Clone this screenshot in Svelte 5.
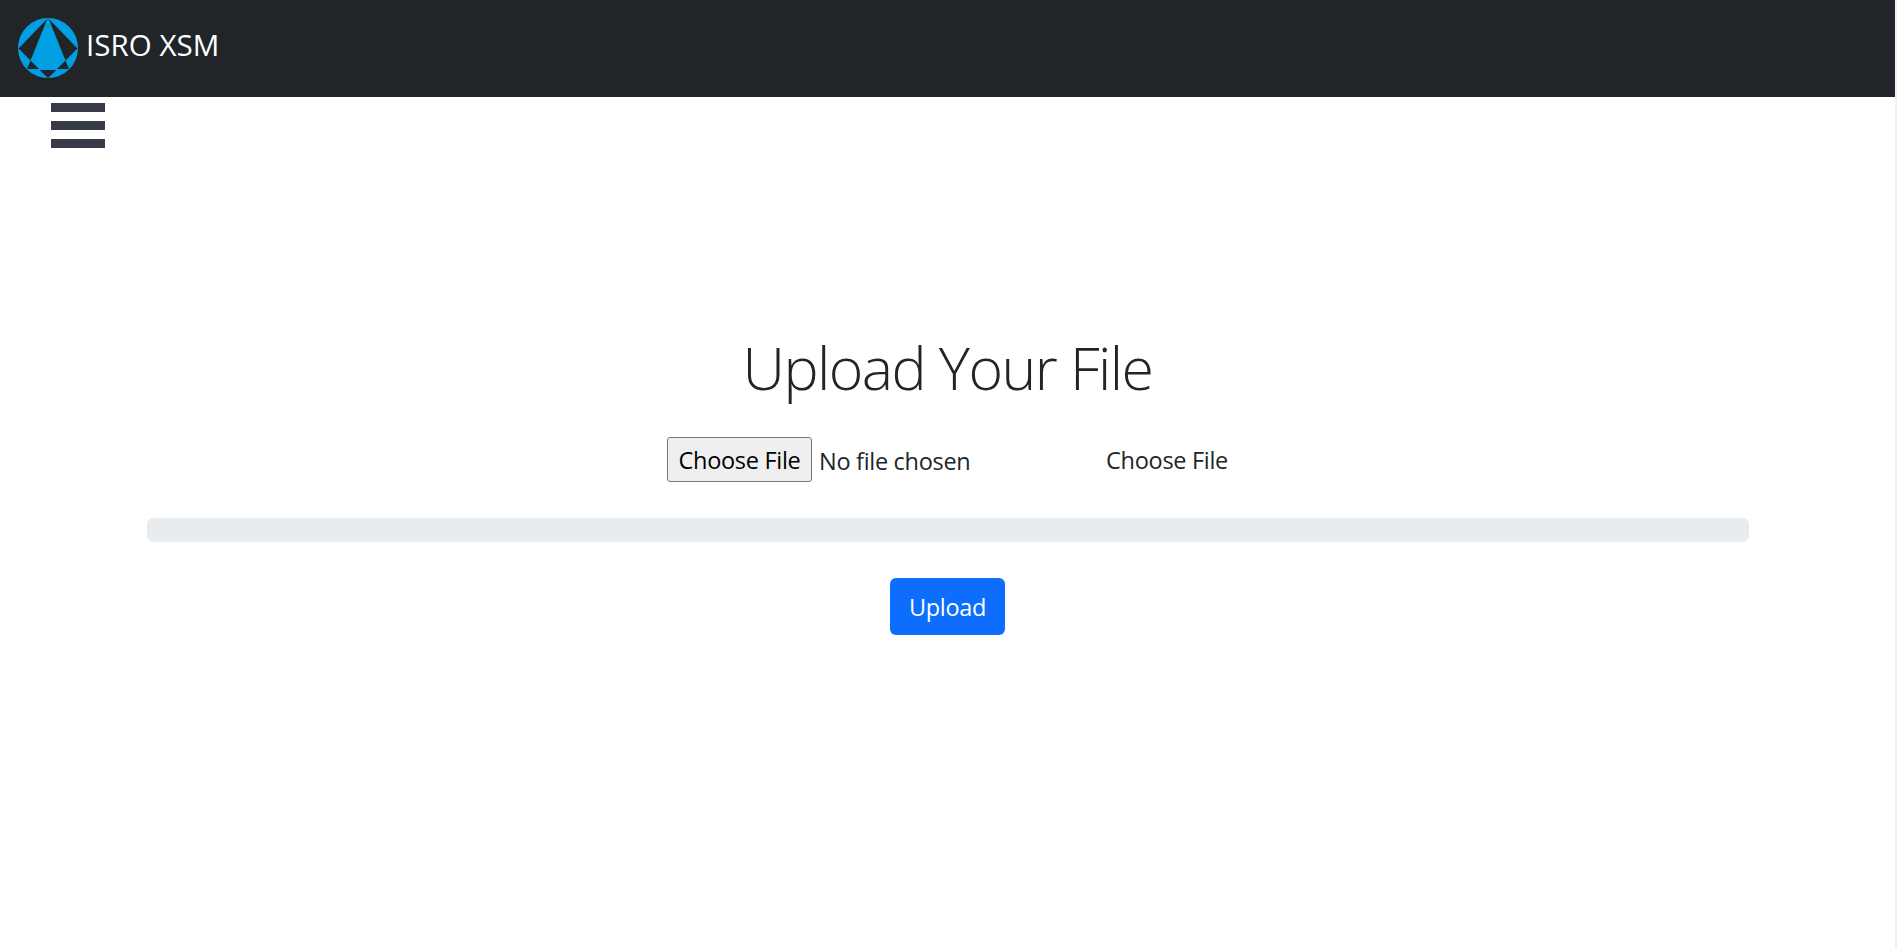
<script>
  let progress = $state(0);
</script>

<div class="page">
  <nav>
    <svg class="logo" viewBox="0 0 60 60" aria-hidden="true">
      <circle cx="30" cy="30" r="30" fill="#009fe3" />
      <g fill="#212529">
        <path d="M29.5 .5 12.5 42.5 .5 30.5Z" />
        <path d="M30.5 .5 59.5 30.5 47.5 42.5Z" />
        <path d="M12.5 42.5 21 51H9Z" />
        <path d="M47.5 42.5 39 51h12Z" />
        <path d="M21.5 52h17L30 60Z" />
      </g>
    </svg>
    <span class="brand">ISRO XSM</span>
  </nav>
  <div class="menu"><i></i><i></i><i></i></div>
  <main>
    <h1>Upload Your File</h1>
    <div class="picker">
      <button class="choose"><span class="t">Choose File</span></button>
      <span class="status">No file chosen</span>
      <span class="label t">Choose File</span>
    </div>
    <div class="track"><div class="bar" style="width: {progress}%"></div></div>
    <button class="upload">Upload</button>
  </main>
</div>

<style>
  :global(body) {
    margin: 0;
    background: #fff;
  }
  .page {
    box-sizing: border-box;
    height: 949px;
    border-right: 2px solid #f1f1f1;
    font-family: "Open Sans", "Noto Sans", sans-serif;
    font-size: 23.5px;
    color: #212529;
    overflow: hidden;
    white-space: nowrap;
  }
  nav {
    box-sizing: border-box;
    height: 97px;
    padding: 18px 18px 0;
    display: flex;
    align-items: flex-start;
    background: #212529;
    color: #fff;
  }
  .logo {
    width: 60px;
    height: 60px;
    flex: none;
  }
  .brand {
    margin-left: 8px;
    font-size: 29.5px;
    line-height: 54px;
    letter-spacing: 0.05px;
  }
  .menu {
    width: 54px;
    margin: 6px 0 0 51px;
    display: grid;
    gap: 9px;
  }
  .menu i {
    height: 9px;
    background: #373a47;
  }
  main {
    display: flex;
    flex-direction: column;
    align-items: center;
  }
  h1 {
    margin: 183px 0 0;
    height: 106px;
    line-height: 72px;
    font-size: 59px;
    font-weight: 300;
    letter-spacing: -1.55px;
  }
  .picker {
    width: 561px;
    height: 45px;
    display: flex;
  }
  button {
    box-sizing: border-box;
    display: flex;
    justify-content: center;
    align-items: center;
    padding: 0;
    font: inherit;
  }
  .choose {
    width: 145px;
    height: 45px;
    padding-top: 2px;
    border: 1px solid #767676;
    border-radius: 3px;
    background: #efefef;
    color: #000;
    line-height: 41px;
  }
  .t {
    letter-spacing: -0.3px;
  }
  .status {
    margin-left: 7px;
    line-height: 49px;
    letter-spacing: -0.3px;
  }
  .label {
    margin-left: auto;
    line-height: 47px;
  }
  .track {
    width: 1602px;
    height: 24px;
    margin-top: 36px;
    border-radius: 6px;
    background: #e9ecef;
    overflow: hidden;
  }
  .bar {
    height: 100%;
    background: #0d6efd;
  }
  .upload {
    width: 115px;
    height: 57px;
    margin-top: 36px;
    border: 0;
    border-radius: 6px;
    background: #0d6efd;
    color: #fff;
    letter-spacing: -0.3px;
  }
</style>
